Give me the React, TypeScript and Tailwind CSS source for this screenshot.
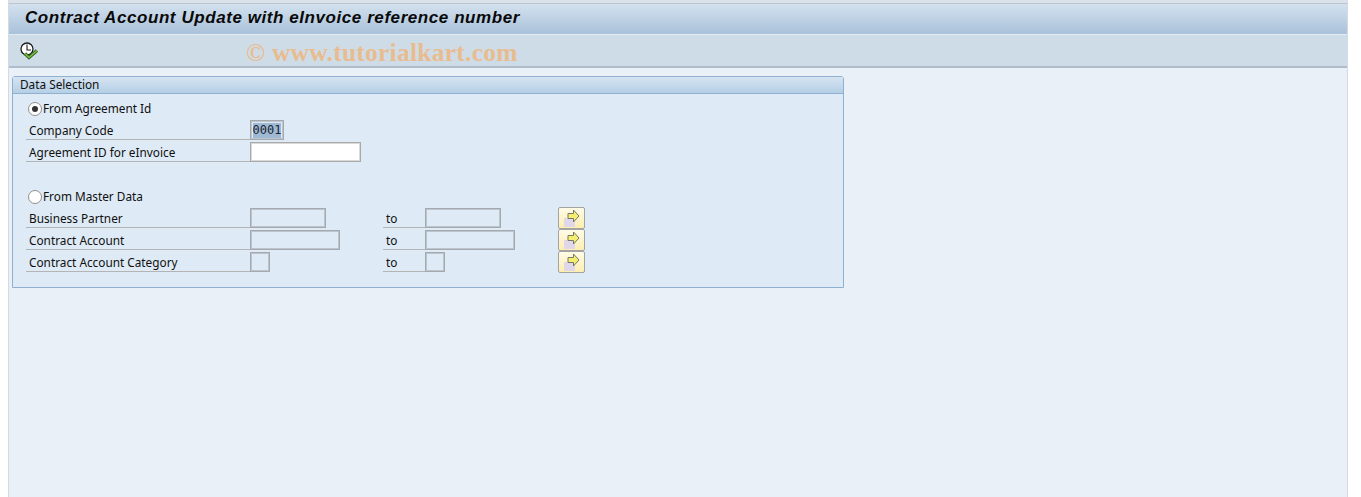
import React from "react";

const fontUi = "font-['Noto_Sans','Open_Sans',sans-serif]";

function ClockCheckIcon() {
  return (
    <svg width="20" height="20" viewBox="0 0 20 20" className="block">
      <circle cx="7" cy="8" r="6" fill="#ffffff" stroke="#1c1c1c" strokeWidth="1.3" />
      <path d="M7 3.5V9H11" fill="none" stroke="#1c1c1c" strokeWidth="1.1" />
      <path d="M5 12.5l4 4 8-7" fill="none" stroke="#2f5d1c" strokeWidth="3.2" />
      <path d="M5 12.5l4 4 8-7" fill="none" stroke="#7ac143" strokeWidth="1.6" />
    </svg>
  );
}

function MultiSelectIcon() {
  return (
    <svg width="16" height="18" viewBox="0 0 16 18" className="block">
      <rect x="0" y="9" width="11" height="9" fill="#e0d8e8" />
      <path d="M4 4.5H9.5V1L15 7 9.5 13V9.5H4Z" fill="#f3ee70" stroke="#77776a" strokeWidth="1" />
    </svg>
  );
}

function Radio({ checked, label }: { checked?: boolean; label: string }) {
  return (
    <div className="flex h-[22px] items-start pl-[2px]">
      <span className="mt-[4px] flex h-[14px] w-[14px] items-center justify-center rounded-full border border-[#8f8f8f] bg-white">
        {checked && <span className="h-[6px] w-[6px] rounded-full bg-[#333333]" />}
      </span>
      <span className="ml-[1px] text-[11.8px] leading-[21px] text-[#101010]">{label}</span>
    </div>
  );
}

function Field({ width, value, active }: { width: string; value?: string; active?: boolean }) {
  return (
    <div
      className={`h-[20px] border ${width} ${
        active
          ? "border-[#a9a9a9] bg-white shadow-[inset_0_0_0_1px_#d9d9d9]"
          : "border-[#a5a9ad] bg-[#deeaf5] shadow-[inset_0_0_0_1px_#bcc5cd]"
      } flex items-center justify-center`}
    >
      {value && (
        <span className="bg-[#9fb8d3] font-['DejaVu_Sans_Mono',monospace] text-[12px] leading-[15px] text-[#1a2530]">{value}</span>
      )}
    </div>
  );
}

function Label({ text }: { text: string }) {
  return (
    <div className="h-[20px] w-[224px] border-b border-[#b4b4b4] pl-[3px] text-[11.8px] leading-[21px] text-[#101010]">
      {text}
    </div>
  );
}

function RangeRow({ label, width }: { label: string; width: string }) {
  return (
    <div className="flex h-[22px] items-start">
      <Label text={label} />
      <div className="w-[133px]">
        <Field width={width} />
      </div>
      <div className="h-[20px] w-[42px] border-b border-[#b4b4b4] pl-[3px] text-[11.8px] leading-[21px] text-[#101010]">to</div>
      <div className="w-[133px]">
        <Field width={width} />
      </div>
      <button className="-mt-[1px] flex h-[22px] w-[27px] items-center justify-center rounded-[2px] border border-[#a3a3a3] bg-gradient-to-b from-[#fffbe6] to-[#fdeeb0]">
        <MultiSelectIcon />
      </button>
    </div>
  );
}

export default function App() {
  return (
    <div className={`flex h-[497px] w-[1361px] overflow-hidden bg-white ${fontUi}`}>
      <div className="ml-[8px] mr-[13px] flex flex-1 flex-col border-x border-[#d3dae3] bg-[#e9f0f8]">
        <div className="h-[4px] border-b border-[#b9c4d0] bg-[#dbe2ea]" />
        <div className="flex h-[31px] items-center border-b border-[#e4edf5] bg-gradient-to-b from-[#d3e1ee] to-[#a9c1da] pb-[2px] pl-[16px]">
          <h1 className="font-['Liberation_Sans',sans-serif] text-[17px] font-bold italic leading-[22px] tracking-[0.57px] text-[#0a0a0a]">
            Contract Account Update with eInvoice reference number
          </h1>
        </div>
        <div className="flex h-[33px] items-center border-b-2 border-[#aebccb] bg-[#cedce8] pl-[11px]">
          <ClockCheckIcon />
          <span className="ml-[206px] mt-[4px] font-['Liberation_Serif',serif] text-[25.5px] font-bold leading-[28px] tracking-[0.25px] text-[#e9bc8f]">
            © www.tutorialkart.com
          </span>
        </div>
        <div className="ml-[3px] mt-[8px] h-[212px] w-[832px] rounded-t-[3px] border border-[#8fb0cf] bg-[#deeaf5]">
          <div className="h-[17px] border-b border-[#8fb0cf] bg-gradient-to-b from-[#d6e4f1] to-[#b5cfe6] pl-[7px] text-[11.8px] leading-[15px] text-[#101010]">
            Data Selection
          </div>
          <div className="pl-[13px] pt-[4px]">
            <Radio checked label="From Agreement Id" />
            <div className="flex h-[22px] items-start">
              <Label text="Company Code" />
              <Field width="w-[34px]" value="0001" />
            </div>
            <div className="flex h-[22px] items-start">
              <Label text="Agreement ID for eInvoice" />
              <Field width="w-[111px]" active />
            </div>
            <div className="h-[22px]" />
            <Radio label="From Master Data" />
            <RangeRow label="Business Partner" width="w-[76px]" />
            <RangeRow label="Contract Account" width="w-[90px]" />
            <RangeRow label="Contract Account Category" width="w-[20px]" />
          </div>
        </div>
      </div>
    </div>
  );
}
